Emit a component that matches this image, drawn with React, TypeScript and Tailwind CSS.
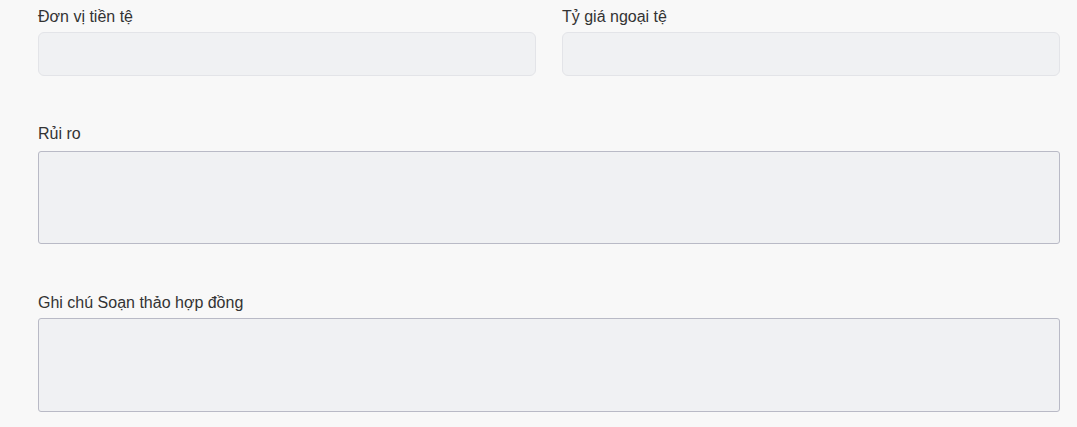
export default function App() {
  return (
    <div
      className="min-h-[427px] w-full bg-[#f8f8f8] pl-[38px] pr-[17px] pt-[5px] text-[16px] leading-[24px] text-[#333333]"
      style={{ fontFamily: '"Liberation Sans", Arial, sans-serif' }}
    >
      <div className="grid grid-cols-2 gap-[26px]">
        <div className="flex flex-col">
          <label className="mb-[3px]">Đơn vị tiền tệ</label>
          <input className="h-[44px] rounded-[6px] border border-[#e3e4e8] bg-[#f0f1f3] outline-none" />
        </div>
        <div className="flex flex-col">
          <label className="mb-[3px]">Tỷ giá ngoại tệ</label>
          <input className="h-[44px] rounded-[6px] border border-[#e3e4e8] bg-[#f0f1f3] outline-none" />
        </div>
      </div>

      <div className="mt-[46px] flex flex-col">
        <label className="mb-[5px]">Rủi ro</label>
        <textarea className="h-[93px] resize-none rounded-[3px] border border-[#b9bac6] bg-[#f0f1f3] outline-none" />
      </div>

      <div className="mt-[47px] flex flex-col">
        <label className="mb-[3px]">Ghi chú Soạn thảo hợp đồng</label>
        <textarea className="h-[94px] resize-none rounded-[3px] border border-[#b9bac6] bg-[#f0f1f3] outline-none" />
      </div>
    </div>
  )
}
